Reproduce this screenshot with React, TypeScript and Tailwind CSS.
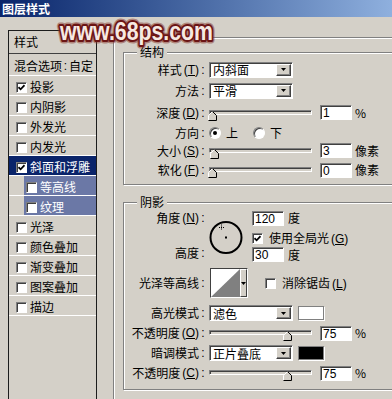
import React from "react";

type Item = { label: string; on?: boolean; sel?: boolean; sub?: boolean };

const items: Item[] = [
  { label: "投影", on: true },
  { label: "内阴影" },
  { label: "外发光" },
  { label: "内发光" },
  { label: "斜面和浮雕", on: true, sel: true },
  { label: "等高线", sub: true },
  { label: "纹理", sub: true },
  { label: "光泽" },
  { label: "颜色叠加" },
  { label: "渐变叠加" },
  { label: "图案叠加" },
  { label: "描边" },
];

function Check({ on }: { on?: boolean }) {
  return (
    <span className="w-[11px] h-[11px] shrink-0 flex items-center justify-center bg-white border border-[#808080] border-b-white border-r-white shadow-[inset_1px_1px_0_#404040]">
      {on && (
        <svg width="7" height="7" viewBox="0 0 7 7">
          <path d="M0.5 3.2L2.6 5.3L6.5 1.2" stroke="#000" strokeWidth="1.7" fill="none" />
        </svg>
      )}
    </span>
  );
}

function Radio({ on }: { on?: boolean }) {
  return (
    <span className="w-[12px] h-[12px] shrink-0 rounded-full flex items-center justify-center bg-white border border-[#808080] border-b-white border-r-white shadow-[inset_1px_1px_0_#404040]">
      {on && <span className="w-[4px] h-[4px] rounded-full bg-black" />}
    </span>
  );
}

function Arrow() {
  return (
    <svg width="5" height="3" viewBox="0 0 5 3">
      <path d="M0 0H5L2.5 3Z" fill="#000" />
    </svg>
  );
}

function Select({ value }: { value: string }) {
  return (
    <div className="ml-[2px] w-[84px] h-[16px] shrink-0 flex items-center bg-white border border-[#808080] border-b-white border-r-white shadow-[inset_1px_1px_0_#404040]">
      <span className="flex-1 pl-[3px] pt-[1px]">{value}</span>
      <span className="mr-[1px] w-[15px] h-[12px] flex items-center justify-center bg-[#d4d0c8] border border-white border-b-[#404040] border-r-[#404040] shadow-[inset_-1px_-1px_0_#808080]">
        <Arrow />
      </span>
    </div>
  );
}

function Slider({ pos }: { pos: number }) {
  return (
    <div className="relative ml-[2px] w-[103px] h-[16px] shrink-0">
      <div className="absolute left-0 right-0 top-[5px] h-[5px] bg-[#d4d0c8] border border-[#808080] border-b-white border-r-white shadow-[inset_1px_1px_0_#404040]" />
      <svg className="absolute top-[6px]" style={{ left: pos }} width="9" height="10" viewBox="0 0 9 10">
        <path d="M0.5 9.5V4.5L4.5 0.5L8.5 4.5V9.5Z" fill="#d4d0c8" />
        <path d="M0.5 9V4.5L4.5 0.5" stroke="#fff" fill="none" />
        <path d="M4.5 0.5L8.5 4.5V9.5H0.5" stroke="#000" fill="none" />
      </svg>
    </div>
  );
}

function Box({ v }: { v: string }) {
  return (
    <div className="w-[32px] h-[15px] shrink-0 flex items-center pl-[2px] pt-[1px] bg-white border border-[#808080] border-b-white border-r-white shadow-[inset_1px_1px_0_#404040] font-['Liberation_Sans',sans-serif]">
      {v}
    </div>
  );
}

// access key, e.g. (T) with the letter underlined
function K({ c }: { c: string }) {
  return (
    <span className="ml-[2px] font-['Liberation_Sans',sans-serif]">
      (<span className="underline">{c}</span>)
    </span>
  );
}

function Label({ t, k }: { t: string; k?: string }) {
  return (
    <div className="w-[83px] shrink-0 flex items-center justify-end whitespace-nowrap">
      <span>{t}</span>
      {k && <K c={k} />}
      <span className="w-[8px] text-center font-['Liberation_Sans',sans-serif]">:</span>
    </div>
  );
}

function StyleList() {
  return (
    <div className="ml-[8px] mt-[13px] w-[89px] shrink-0 flex flex-col border-x border-t border-[#1c1c1c]">
      <div className="h-[23px] flex items-center pl-[5px] border-b border-[#404040]">样式</div>
      <div className="h-[21px] flex items-center pl-[5px] pt-[2px] whitespace-nowrap">
        混合选项<span className="w-[7px] text-center font-['Liberation_Sans',sans-serif]">:</span>自定
      </div>
      {items.map((it) => (
        <div
          key={it.label}
          className={`h-[20px] flex border-t border-white ${it.sel ? "bg-[#0a246a] text-white" : ""}`}
        >
          <div
            className={`flex-1 flex items-center pt-[3px] ${
              it.sub ? "ml-[15px] pl-[2px] bg-[#6b78a6] text-white" : "pl-[7px]"
            }`}
          >
            <Check on={it.on} />
            <span className="ml-[3px] whitespace-nowrap">{it.label}</span>
          </div>
        </div>
      ))}
      <div className="border-t border-white" />
    </div>
  );
}

function Structure() {
  return (
    <div className="relative w-[290px] pt-[6px] pb-[3px] border border-[#808080] shadow-[inset_1px_1px_0_#fff,1px_1px_0_#fff]">
      <span className="absolute left-[13px] top-[-9px] px-[3px] h-[16px] leading-[16px] bg-[#d4d0c8]">结构</span>
      <div className="h-[21px] flex items-center">
        <Label t="样式" k="T" />
        <Select value="内斜面" />
      </div>
      <div className="h-[21px] flex items-center">
        <Label t="方法" />
        <Select value="平滑" />
      </div>
      <div className="h-[23px] flex items-center">
        <Label t="深度" k="D" />
        <Slider pos={-1} />
        <div className="ml-[8px]">
          <Box v="1" />
        </div>
        <span className="ml-[3px]">%</span>
      </div>
      <div className="h-[18px] flex items-center">
        <Label t="方向" />
        <div className="ml-[2px]">
          <Radio on />
        </div>
        <span className="ml-[5px]">上</span>
        <div className="ml-[15px]">
          <Radio />
        </div>
        <span className="ml-[5px]">下</span>
      </div>
      <div className="h-[17px] flex items-center">
        <Label t="大小" k="S" />
        <Slider pos={1} />
        <div className="ml-[8px]">
          <Box v="3" />
        </div>
        <span className="ml-[3px]">像素</span>
      </div>
      <div className="h-[22px] flex items-center">
        <Label t="软化" k="F" />
        <Slider pos={-1} />
        <div className="ml-[8px]">
          <Box v="0" />
        </div>
        <span className="ml-[3px]">像素</span>
      </div>
    </div>
  );
}

function Shading() {
  return (
    <div className="relative mt-[17px] w-[290px] pt-[8px] pb-[6px] border border-[#808080] shadow-[inset_1px_1px_0_#fff,1px_1px_0_#fff]">
      <span className="absolute left-[13px] top-[-9px] px-[3px] h-[16px] leading-[16px] bg-[#d4d0c8]">阴影</span>
      <div className="h-[52px] flex">
        <div className="w-[83px] shrink-0 flex flex-col">
          <div className="h-[14px] flex">
            <Label t="角度" k="N" />
          </div>
          <div className="mt-[21px] h-[14px] flex">
            <Label t="高度" />
          </div>
        </div>
        <svg className="ml-[2px] mt-[9px] shrink-0" width="35" height="35" viewBox="0 0 35 35">
          <circle cx="17" cy="17.5" r="15.5" fill="none" stroke="#000" strokeWidth="2" />
          <rect x="16" y="16.5" width="2" height="2" fill="#000" />
          <path d="M12.5 4.5V10M10 7.5H15.5" stroke="#000" strokeWidth="1" strokeDasharray="1 1" />
        </svg>
        <div className="ml-[8px] flex flex-col">
          <div className="h-[14px] flex items-center">
            <Box v="120" />
            <span className="ml-[4px]">度</span>
          </div>
          <div className="mt-[7px] h-[12px] flex items-center">
            <Check on />
            <span className="ml-[6px] whitespace-nowrap">
              使用全局光<K c="G" />
            </span>
          </div>
          <div className="mt-[3px] h-[15px] flex items-center">
            <Box v="30" />
            <span className="ml-[4px]">度</span>
          </div>
        </div>
      </div>
      <div className="mt-[5px] h-[30px] flex items-center">
        <Label t="光泽等高线" />
        <div className="ml-[3px] w-[38px] h-[30px] shrink-0 flex border border-[#404040] border-b-white border-r-white">
          <svg width="29" height="28" viewBox="0 0 29 28">
            <rect width="29" height="28" fill="#fff" />
            <path d="M0 28L29 0V28Z" fill="#808080" />
          </svg>
          <div className="flex-1 flex items-center justify-center bg-[#d4d0c8] border border-white border-b-[#404040] border-r-[#404040]">
            <Arrow />
          </div>
        </div>
        <div className="ml-[17px]">
          <Check />
        </div>
        <span className="ml-[6px] whitespace-nowrap">
          消除锯齿<K c="L" />
        </span>
      </div>
      <div className="mt-[5px] h-[20px] flex items-center">
        <Label t="高光模式" />
        <Select value="滤色" />
        <div className="ml-[5px] w-[26px] h-[14px] bg-white border border-[#808080] shadow-[1px_1px_0_#fff]" />
      </div>
      <div className="h-[20px] flex items-center">
        <Label t="不透明度" k="O" />
        <Slider pos={74} />
        <div className="ml-[8px]">
          <Box v="75" />
        </div>
        <span className="ml-[3px]">%</span>
      </div>
      <div className="h-[20px] flex items-center">
        <Label t="暗调模式" />
        <Select value="正片叠底" />
        <div className="ml-[5px] w-[26px] h-[14px] bg-black border border-[#808080] shadow-[1px_1px_0_#fff]" />
      </div>
      <div className="h-[20px] flex items-center">
        <Label t="不透明度" k="C" />
        <Slider pos={74} />
        <div className="ml-[8px]">
          <Box v="75" />
        </div>
        <span className="ml-[3px]">%</span>
      </div>
    </div>
  );
}

export default function App() {
  return (
    <div className="relative w-[392px] h-[399px] overflow-hidden flex flex-col bg-[#d4d0c8] text-black text-[12px] leading-none font-['Noto_Sans_CJK_SC',sans-serif]">
      <div className="h-[17px] shrink-0 flex items-center pl-[2px] bg-linear-to-r from-[#0a246a] to-[#8fb0de] text-white font-bold">
        图层样式
      </div>
      <div className="flex flex-1 min-h-0">
        <StyleList />
        <div className="ml-[16px] mt-[20px] w-[300px] shrink-0 pl-[9px] pt-[14px] border-l border-t border-[#808080] shadow-[inset_1px_1px_0_#fff]">
          <Structure />
          <Shading />
        </div>
      </div>
      {/* watermark */}
      <svg className="absolute left-[56px] top-[14px]" width="200" height="36" viewBox="0 0 200 36">
        <text
          x="4"
          y="26"
          fontFamily="Liberation Sans, Arial, sans-serif"
          fontWeight="bold"
          fontSize="25"
          textLength="153"
          lengthAdjust="spacingAndGlyphs"
          fill="none"
          stroke="#8a3a30"
          strokeOpacity="0.5"
          strokeWidth="7"
          strokeLinejoin="round"
        >
          www.68ps.com
        </text>
        <text
          x="4"
          y="26"
          fontFamily="Liberation Sans, Arial, sans-serif"
          fontWeight="bold"
          fontSize="25"
          textLength="153"
          lengthAdjust="spacingAndGlyphs"
          fill="#f6e9e2"
          stroke="#6b1515"
          strokeWidth="4"
          strokeLinejoin="round"
          paintOrder="stroke"
        >
          www.68ps.com
        </text>
      </svg>
    </div>
  );
}
